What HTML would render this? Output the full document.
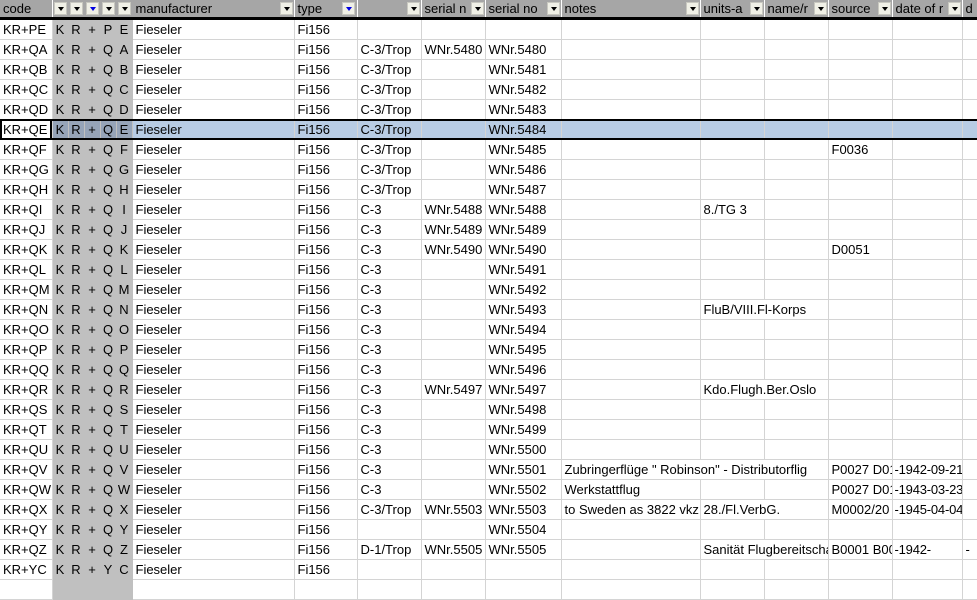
<!DOCTYPE html>
<html><head><meta charset="utf-8"><style>
body{margin:0;width:977px;height:584px;overflow:hidden;background:#fff;font-family:"Liberation Sans",sans-serif;font-size:13px;color:#000}
table{border-collapse:collapse;table-layout:fixed;width:977px;position:absolute;left:0;top:0}
td{height:18px;padding:1px 0 0 3px;border-right:1px solid #d4d4d4;border-bottom:1px solid #d4d4d4;white-space:nowrap;overflow:hidden;line-height:18px}
td.g{background:#c0c0c0;text-align:center;padding:1px 0 0 0;border-color:#c0c0c0}
td.d{padding-left:2px;letter-spacing:-0.2px}
tr.h td{background:#a6a6a6;border-bottom:3px solid #000;height:17px;line-height:17px;padding-top:0;border-right:1px solid #fff;position:relative}
tr.h td.g{background:#a6a6a6;border-right:1px solid #a6a6a6}
.b{position:absolute;right:1px;top:2px;width:13px;height:13px;background:#f0f0e6;border:1px solid #c8c8c0;box-sizing:border-box}
.b:after{content:"";position:absolute;left:3px;top:4px;border-left:3px solid transparent;border-right:3px solid transparent;border-top:4px solid #000}
.b.bl:after{border-top-color:#0000e0}
tr.s td{background:#b8cce4}
tr.s td.g{background:#96a4b8}
#sel{position:absolute;left:0;top:119px;width:977px;height:21px;border-top:2px solid #000;border-bottom:2px solid #000;box-sizing:border-box;}
#selc{position:absolute;left:0;top:119px;width:52px;height:21px;border:2px solid #000;box-sizing:border-box}
</style></head><body>
<table>
<colgroup><col style="width:52px"><col style="width:16px"><col style="width:16px"><col style="width:16px"><col style="width:16px"><col style="width:16px"><col style="width:162px"><col style="width:63px"><col style="width:64px"><col style="width:64px"><col style="width:76px"><col style="width:139px"><col style="width:64px"><col style="width:64px"><col style="width:64px"><col style="width:70px"><col style="width:15px"></colgroup>
<tr class="h"><td>code</td><td class="g"><span class="b"></span></td><td class="g"><span class="b"></span></td><td class="g"><span class="b bl"></span></td><td class="g"><span class="b"></span></td><td class="g"><span class="b"></span></td><td>manufacturer<span class="b"></span></td><td>type<span class="b bl" style="right:2px"></span></td><td><span class="b"></span></td><td>serial n<span class="b"></span></td><td>serial no<span class="b"></span></td><td>notes<span class="b"></span></td><td>units-a<span class="b"></span></td><td>name/r<span class="b"></span></td><td>source<span class="b"></span></td><td>date of r<span class="b"></span></td><td>d</td></tr>
<tr><td>KR+PE</td><td class="g">K</td><td class="g">R</td><td class="g">+</td><td class="g">P</td><td class="g">E</td><td>Fieseler</td><td>Fi156</td><td></td><td></td><td></td><td></td><td></td><td></td><td></td><td></td><td></td></tr>
<tr><td>KR+QA</td><td class="g">K</td><td class="g">R</td><td class="g">+</td><td class="g">Q</td><td class="g">A</td><td>Fieseler</td><td>Fi156</td><td>C-3/Trop</td><td>WNr.5480</td><td>WNr.5480</td><td></td><td></td><td></td><td></td><td></td><td></td></tr>
<tr><td>KR+QB</td><td class="g">K</td><td class="g">R</td><td class="g">+</td><td class="g">Q</td><td class="g">B</td><td>Fieseler</td><td>Fi156</td><td>C-3/Trop</td><td></td><td>WNr.5481</td><td></td><td></td><td></td><td></td><td></td><td></td></tr>
<tr><td>KR+QC</td><td class="g">K</td><td class="g">R</td><td class="g">+</td><td class="g">Q</td><td class="g">C</td><td>Fieseler</td><td>Fi156</td><td>C-3/Trop</td><td></td><td>WNr.5482</td><td></td><td></td><td></td><td></td><td></td><td></td></tr>
<tr><td>KR+QD</td><td class="g">K</td><td class="g">R</td><td class="g">+</td><td class="g">Q</td><td class="g">D</td><td>Fieseler</td><td>Fi156</td><td>C-3/Trop</td><td></td><td>WNr.5483</td><td></td><td></td><td></td><td></td><td></td><td></td></tr>
<tr class="s"><td style="background:#fff">KR+QE</td><td class="g">K</td><td class="g">R</td><td class="g">+</td><td class="g">Q</td><td class="g">E</td><td>Fieseler</td><td>Fi156</td><td>C-3/Trop</td><td></td><td>WNr.5484</td><td></td><td></td><td></td><td></td><td></td><td></td></tr>
<tr><td>KR+QF</td><td class="g">K</td><td class="g">R</td><td class="g">+</td><td class="g">Q</td><td class="g">F</td><td>Fieseler</td><td>Fi156</td><td>C-3/Trop</td><td></td><td>WNr.5485</td><td></td><td></td><td></td><td>F0036</td><td></td><td></td></tr>
<tr><td>KR+QG</td><td class="g">K</td><td class="g">R</td><td class="g">+</td><td class="g">Q</td><td class="g">G</td><td>Fieseler</td><td>Fi156</td><td>C-3/Trop</td><td></td><td>WNr.5486</td><td></td><td></td><td></td><td></td><td></td><td></td></tr>
<tr><td>KR+QH</td><td class="g">K</td><td class="g">R</td><td class="g">+</td><td class="g">Q</td><td class="g">H</td><td>Fieseler</td><td>Fi156</td><td>C-3/Trop</td><td></td><td>WNr.5487</td><td></td><td></td><td></td><td></td><td></td><td></td></tr>
<tr><td>KR+QI</td><td class="g">K</td><td class="g">R</td><td class="g">+</td><td class="g">Q</td><td class="g">I</td><td>Fieseler</td><td>Fi156</td><td>C-3</td><td>WNr.5488</td><td>WNr.5488</td><td></td><td>8./TG 3</td><td></td><td></td><td></td><td></td></tr>
<tr><td>KR+QJ</td><td class="g">K</td><td class="g">R</td><td class="g">+</td><td class="g">Q</td><td class="g">J</td><td>Fieseler</td><td>Fi156</td><td>C-3</td><td>WNr.5489</td><td>WNr.5489</td><td></td><td></td><td></td><td></td><td></td><td></td></tr>
<tr><td>KR+QK</td><td class="g">K</td><td class="g">R</td><td class="g">+</td><td class="g">Q</td><td class="g">K</td><td>Fieseler</td><td>Fi156</td><td>C-3</td><td>WNr.5490</td><td>WNr.5490</td><td></td><td></td><td></td><td>D0051</td><td></td><td></td></tr>
<tr><td>KR+QL</td><td class="g">K</td><td class="g">R</td><td class="g">+</td><td class="g">Q</td><td class="g">L</td><td>Fieseler</td><td>Fi156</td><td>C-3</td><td></td><td>WNr.5491</td><td></td><td></td><td></td><td></td><td></td><td></td></tr>
<tr><td>KR+QM</td><td class="g">K</td><td class="g">R</td><td class="g">+</td><td class="g">Q</td><td class="g">M</td><td>Fieseler</td><td>Fi156</td><td>C-3</td><td></td><td>WNr.5492</td><td></td><td></td><td></td><td></td><td></td><td></td></tr>
<tr><td>KR+QN</td><td class="g">K</td><td class="g">R</td><td class="g">+</td><td class="g">Q</td><td class="g">N</td><td>Fieseler</td><td>Fi156</td><td>C-3</td><td></td><td>WNr.5493</td><td></td><td colspan="2">FluB/VIII.Fl-Korps</td><td></td><td></td><td></td></tr>
<tr><td>KR+QO</td><td class="g">K</td><td class="g">R</td><td class="g">+</td><td class="g">Q</td><td class="g">O</td><td>Fieseler</td><td>Fi156</td><td>C-3</td><td></td><td>WNr.5494</td><td></td><td></td><td></td><td></td><td></td><td></td></tr>
<tr><td>KR+QP</td><td class="g">K</td><td class="g">R</td><td class="g">+</td><td class="g">Q</td><td class="g">P</td><td>Fieseler</td><td>Fi156</td><td>C-3</td><td></td><td>WNr.5495</td><td></td><td></td><td></td><td></td><td></td><td></td></tr>
<tr><td>KR+QQ</td><td class="g">K</td><td class="g">R</td><td class="g">+</td><td class="g">Q</td><td class="g">Q</td><td>Fieseler</td><td>Fi156</td><td>C-3</td><td></td><td>WNr.5496</td><td></td><td></td><td></td><td></td><td></td><td></td></tr>
<tr><td>KR+QR</td><td class="g">K</td><td class="g">R</td><td class="g">+</td><td class="g">Q</td><td class="g">R</td><td>Fieseler</td><td>Fi156</td><td>C-3</td><td>WNr.5497</td><td>WNr.5497</td><td></td><td colspan="2">Kdo.Flugh.Ber.Oslo</td><td></td><td></td><td></td></tr>
<tr><td>KR+QS</td><td class="g">K</td><td class="g">R</td><td class="g">+</td><td class="g">Q</td><td class="g">S</td><td>Fieseler</td><td>Fi156</td><td>C-3</td><td></td><td>WNr.5498</td><td></td><td></td><td></td><td></td><td></td><td></td></tr>
<tr><td>KR+QT</td><td class="g">K</td><td class="g">R</td><td class="g">+</td><td class="g">Q</td><td class="g">T</td><td>Fieseler</td><td>Fi156</td><td>C-3</td><td></td><td>WNr.5499</td><td></td><td></td><td></td><td></td><td></td><td></td></tr>
<tr><td>KR+QU</td><td class="g">K</td><td class="g">R</td><td class="g">+</td><td class="g">Q</td><td class="g">U</td><td>Fieseler</td><td>Fi156</td><td>C-3</td><td></td><td>WNr.5500</td><td></td><td></td><td></td><td></td><td></td><td></td></tr>
<tr><td>KR+QV</td><td class="g">K</td><td class="g">R</td><td class="g">+</td><td class="g">Q</td><td class="g">V</td><td>Fieseler</td><td>Fi156</td><td>C-3</td><td></td><td>WNr.5501</td><td colspan="3">Zubringerflüge " Robinson" - Distributorflig</td><td>P0027 D01</td><td class="d">-1942-09-21</td><td></td></tr>
<tr><td>KR+QW</td><td class="g">K</td><td class="g">R</td><td class="g">+</td><td class="g">Q</td><td class="g">W</td><td>Fieseler</td><td>Fi156</td><td>C-3</td><td></td><td>WNr.5502</td><td>Werkstattflug</td><td></td><td></td><td>P0027 D01</td><td class="d">-1943-03-23</td><td></td></tr>
<tr><td>KR+QX</td><td class="g">K</td><td class="g">R</td><td class="g">+</td><td class="g">Q</td><td class="g">X</td><td>Fieseler</td><td>Fi156</td><td>C-3/Trop</td><td>WNr.5503</td><td>WNr.5503</td><td>to Sweden as 3822 vkz</td><td colspan="2">28./Fl.VerbG.</td><td>M0002/20</td><td class="d">-1945-04-04</td><td></td></tr>
<tr><td>KR+QY</td><td class="g">K</td><td class="g">R</td><td class="g">+</td><td class="g">Q</td><td class="g">Y</td><td>Fieseler</td><td>Fi156</td><td></td><td></td><td>WNr.5504</td><td></td><td></td><td></td><td></td><td></td><td></td></tr>
<tr><td>KR+QZ</td><td class="g">K</td><td class="g">R</td><td class="g">+</td><td class="g">Q</td><td class="g">Z</td><td>Fieseler</td><td>Fi156</td><td>D-1/Trop</td><td>WNr.5505</td><td>WNr.5505</td><td></td><td colspan="2">Sanität Flugbereitschaft</td><td>B0001 B00</td><td class="d">-1942-</td><td>-</td></tr>
<tr><td>KR+YC</td><td class="g">K</td><td class="g">R</td><td class="g">+</td><td class="g">Y</td><td class="g">C</td><td>Fieseler</td><td>Fi156</td><td></td><td></td><td></td><td></td><td></td><td></td><td></td><td></td><td></td></tr>
<tr><td></td><td class="g"></td><td class="g"></td><td class="g"></td><td class="g"></td><td class="g"></td><td></td><td></td><td></td><td></td><td></td><td></td><td></td><td></td><td></td><td></td><td></td></tr>
</table>
<div id="sel"></div><div id="selc"></div>
</body></html>
